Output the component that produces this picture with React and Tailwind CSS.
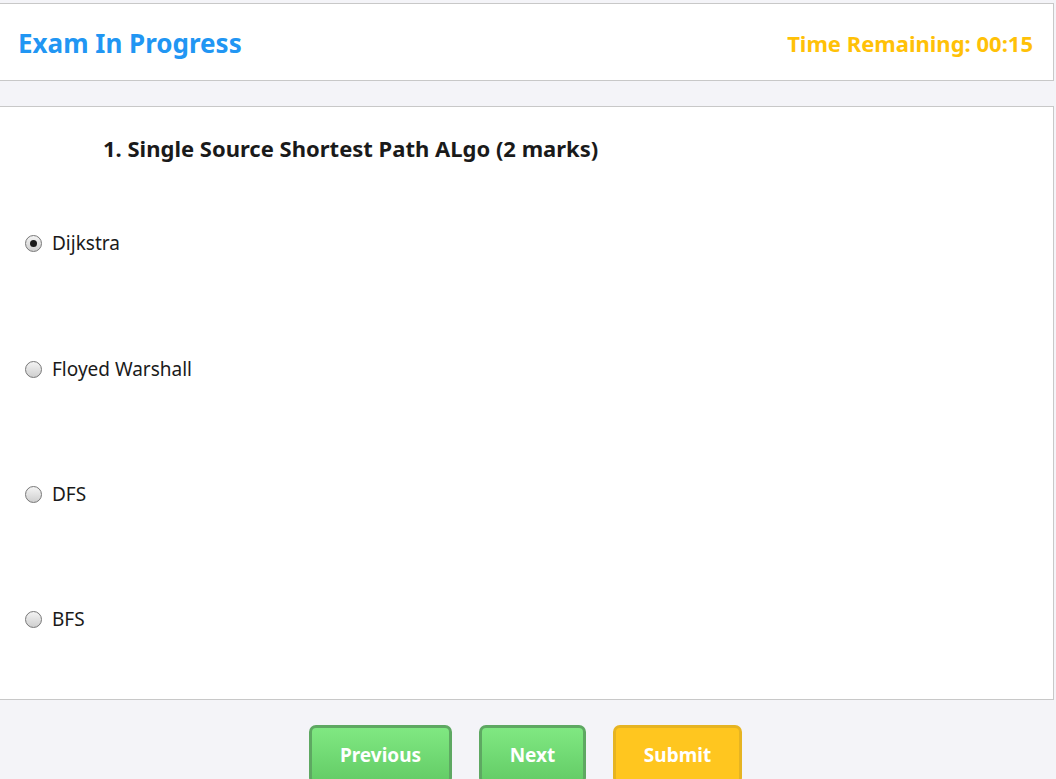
const options = ["Dijkstra", "Floyed Warshall", "DFS", "BFS"];

const Radio = ({ checked }) => (
  <span className="w-[17px] h-[17px] rounded-full border border-[#777] bg-gradient-to-b from-[#f4f4f4] to-[#cfcfcf] flex items-center justify-center shrink-0">
    {checked && <span className="w-[7px] h-[7px] rounded-full bg-[#1a1a1a]"></span>}
  </span>
);

const App = () => {
  return (
    <div
      className="min-h-screen bg-[#f4f4f8] pt-[3px] pr-[2px]"
      style={{ fontFamily: '"Noto Sans", "Open Sans", sans-serif' }}
    >
      <div className="bg-white border border-l-0 border-[#c8c8c8] h-[78px] flex items-center justify-between pl-[18px] pr-[20px]">
        <h1 className="text-[26px] font-bold text-[#2196f3] mt-[2px]">
          Exam In Progress
        </h1>
        <span className="text-[22px] font-bold text-[#ffc107] mt-[2px]">
          Time Remaining: 00:15
        </span>
      </div>

      <div className="mt-[25px] bg-white border border-l-0 border-[#c8c8c8] pt-[26px] pb-[67px]">
        <h2 className="pl-[103px] text-[22px] leading-[30px] font-bold text-[#1a1a1a]">
          1. Single Source Shortest Path ALgo (2 marks)
        </h2>
        <div className="mt-[67px] flex flex-col gap-[99px] pl-[25px]">
          {options.map((opt, i) => (
            <label key={opt} className={`h-[26px] flex items-center gap-[10px] text-[19px] text-[#1a1a1a] ${i === 1 ? "mt-[1px]" : ""}`}>
              <Radio checked={i === 0} />
              {opt}
            </label>
          ))}
        </div>
      </div>

      <div className="mt-[25px] flex justify-center gap-[27px] pr-[3px]">
        <button className="w-[143px] h-[60px] rounded-[7px] border-[3px] border-[#5ea862] bg-gradient-to-b from-[#80e882] to-[#63cc66] text-white text-[19px] font-bold">
          Previous
        </button>
        <button className="w-[107px] h-[60px] rounded-[7px] border-[3px] border-[#5ea862] bg-gradient-to-b from-[#80e882] to-[#63cc66] text-white text-[19px] font-bold">
          Next
        </button>
        <button className="w-[129px] h-[60px] rounded-[7px] border-[3px] border-[#e6b422] bg-[#ffc61f] text-white text-[19px] font-bold">
          Submit
        </button>
      </div>
    </div>
  );
};

export default App;
